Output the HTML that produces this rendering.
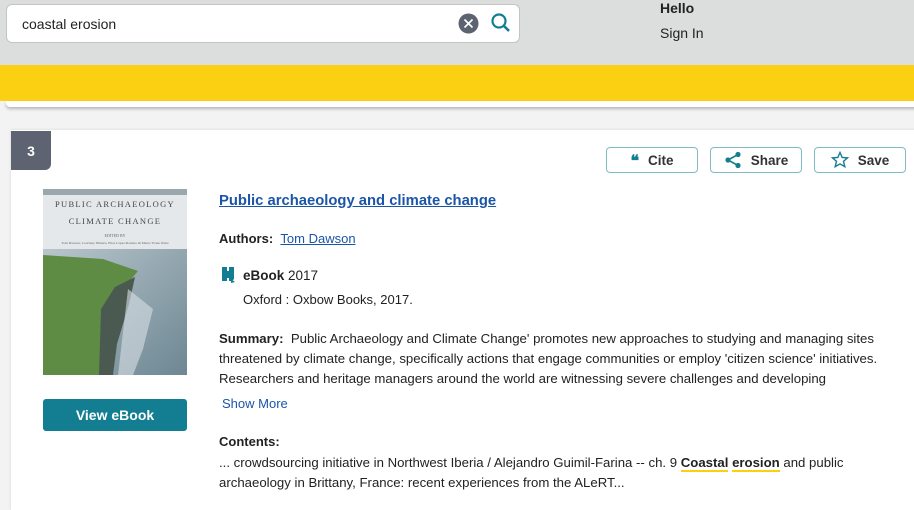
<!DOCTYPE html>
<html><head><style>
*{margin:0;padding:0;box-sizing:border-box}
body{width:914px;height:495px;overflow:hidden;background:#f3f3f3;font-family:"Liberation Sans",sans-serif;color:#222;position:relative}
.a{position:absolute;white-space:nowrap}
.hdr{left:0;top:0;width:914px;height:65px;background:#dcdddd}
.srch{left:6px;top:4px;width:514px;height:39px;background:#fff;border:1px solid #c4c4c4;border-radius:6px}
.yel{left:0;top:65px;width:914px;height:36px;background:#fcd012}
.pan{left:6px;top:101px;width:920px;height:6px;background:#fff;box-shadow:0 2px 3px rgba(0,0,0,.25);border-radius:0 0 4px 4px}
.card{left:11px;top:130px;width:910px;height:380px;background:#fff;box-shadow:0 0 3px rgba(0,0,0,.12)}
.badge{left:11px;top:131px;width:40px;height:39px;background:#5d6370;border-radius:0 0 6px 0;color:#fff;font-size:14px;font-weight:bold;text-align:center;line-height:40px}
.btn{top:147px;height:26px;border:1px solid #7fbcc6;border-radius:4px;font-size:13.5px;font-weight:bold;color:#333;display:flex;align-items:center;justify-content:center;gap:9px}
.t{font-size:13px;color:#222}
a{color:#1a55a8}
.hl{border-bottom:2px solid #fcd012;font-weight:bold}
</style></head><body>
<div class="a hdr"></div>
<div class="a srch"></div>
<div class="a" style="left:22px;top:16px;font-size:14px">coastal erosion</div>
<svg class="a" style="left:458px;top:13px" width="21" height="21"><circle cx="10.5" cy="10.5" r="10" fill="#5d6370"/><path d="M6.5 6.5l8 8M14.5 6.5l-8 8" stroke="#fff" stroke-width="1.7"/></svg>
<svg class="a" style="left:490px;top:12px" width="22" height="22"><circle cx="9" cy="9" r="6.5" fill="none" stroke="#137e91" stroke-width="2.2"/><path d="M13.5 13.5l5.5 5.5" stroke="#137e91" stroke-width="2.6"/></svg>
<div class="a" style="left:660px;top:0px;font-size:14px;font-weight:bold">Hello</div>
<div class="a" style="left:660px;top:25px;font-size:14px">Sign In</div>
<div class="a yel"></div>
<div class="a pan"></div>
<div class="a card"></div>
<div class="a badge">3</div>
<div class="a btn" style="left:606px;width:92px"><span style="color:#137e91;font-family:'DejaVu Serif',serif;font-size:16px">❝</span>Cite</div>
<div class="a btn" style="left:710px;width:92px"><svg width="18" height="18"><circle cx="14" cy="3.5" r="2.6" fill="#137e91"/><circle cx="4" cy="9" r="2.6" fill="#137e91"/><circle cx="14" cy="14.5" r="2.6" fill="#137e91"/><path d="M14 3.5L4 9l10 5.5" stroke="#137e91" stroke-width="1.6" fill="none"/></svg>Share</div>
<div class="a btn" style="left:814px;width:92px"><svg width="18" height="18"><path d="M9 1.5l2.2 5 5.3.4-4 3.5 1.3 5.3L9 12.9l-4.8 2.8 1.3-5.3-4-3.5 5.3-.4z" fill="none" stroke="#137e91" stroke-width="1.4"/></svg>Save</div>
<svg class="a" style="left:43px;top:189px" width="144" height="186">
<defs><linearGradient id="sea" x1="0" y1="0" x2="1" y2="1"><stop offset="0" stop-color="#b9c6cc"/><stop offset="1" stop-color="#6d8793"/></linearGradient></defs>
<rect width="144" height="186" fill="#e4e8ea"/>
<rect y="0" width="144" height="6" fill="#9aa7ad"/>
<rect y="60" width="144" height="126" fill="url(#sea)"/>
<path d="M0 66 L60 70 L95 82 L80 100 L68 140 L60 186 L0 186Z" fill="#5f8c45"/>
<path d="M58 120 L72 98 L92 88 L86 115 L74 155 L70 186 L56 186Z" fill="#4a5a50"/>
<path d="M85 100 L110 120 L100 160 L90 186 L75 186Z" fill="#d8e0e4" opacity=".6"/>
<text x="72" y="18" font-family="Liberation Serif,serif" font-size="8.5" text-anchor="middle" fill="#444" letter-spacing="1.3">PUBLIC ARCHAEOLOGY</text>
<text x="72" y="35" font-family="Liberation Serif,serif" font-size="8.5" text-anchor="middle" fill="#444" letter-spacing="1.3">CLIMATE CHANGE</text>
<text x="72" y="48" font-family="Liberation Serif,serif" font-size="4" text-anchor="middle" fill="#666">EDITED BY</text>
<text x="72" y="55" font-family="Liberation Serif,serif" font-size="3.5" text-anchor="middle" fill="#666">Tom Dawson, Courtney Nimura, Elías López-Romero &amp; Marie-Yvane Daire</text>
</svg>
<div class="a" style="left:43px;top:399px;width:144px;height:32px;background:#137e91;border-radius:3px;color:#fff;font-size:14px;font-weight:bold;text-align:center;line-height:32px">View eBook</div>
<div class="a" style="left:219px;top:193px;font-size:14.8px;font-weight:bold"><a href="#">Public archaeology and climate change</a></div>
<div class="a t" style="left:219px;top:231px"><b>Authors:</b>&nbsp;&nbsp;<a href="#">Tom Dawson</a></div>
<svg class="a" style="left:221px;top:266px" width="16" height="18"><path d="M1 1h5v4h2V1h5v12l-2 2h-3v-3H6v3H1z" fill="#137e91"/><path d="M10 13l4 3-4 1z" fill="#137e91"/></svg>
<div class="a t" style="left:243px;top:268px;font-size:13.5px"><b>eBook</b> 2017</div>
<div class="a t" style="left:243px;top:292px">Oxford : Oxbow Books, 2017.</div>
<div class="a t" style="left:219px;top:329px;line-height:20px;white-space:normal;width:685px;font-size:13.2px"><b>Summary:</b>&nbsp; Public Archaeology and Climate Change' promotes new approaches to studying and managing sites threatened by climate change, specifically actions that engage communities or employ 'citizen science' initiatives. Researchers and heritage managers around the world are witnessing severe challenges and developing</div>
<div class="a t" style="left:222px;top:396px;color:#1a55a8">Show More</div>
<div class="a t" style="left:219px;top:434px"><b>Contents:</b></div>
<div class="a t" style="left:219px;top:453px;line-height:20px;white-space:normal;width:665px;font-size:13.2px">... crowdsourcing initiative in Northwest Iberia / Alejandro Guimil-Farina -- ch. 9 <span class="hl">Coastal</span> <span class="hl">erosion</span> and public archaeology in Brittany, France: recent experiences from the ALeRT...</div>
</body></html>
